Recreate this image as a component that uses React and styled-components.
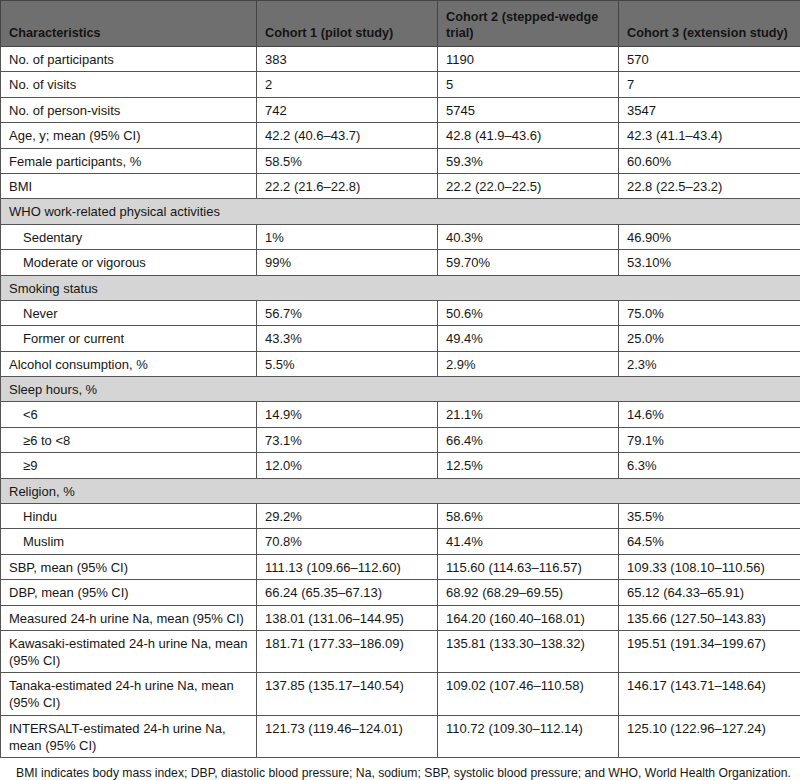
import React from "react";
import styled, { createGlobalStyle } from "styled-components";

const GlobalStyle = createGlobalStyle`
  body {
    margin: 0;
    background: #ffffff;
    font-family: "Liberation Sans", Arial, sans-serif;
    color: #161616;
  }
`;

const Page = styled.div`
  width: 800px;
`;

const Table = styled.table`
  width: 800px;
  border-collapse: collapse;
  table-layout: fixed;
  font-size: 13px;
  line-height: 17px;
`;

const HeadRow = styled.tr`
  height: 46px;
`;

const HeadCell = styled.th`
  border: 1px solid #454545;
  background: #6f6f6f;
  padding: 0 8px 5px 8px;
  text-align: left;
  vertical-align: bottom;
  font-size: 12.7px;
  font-weight: 700;
  line-height: 16px;
  color: #141414;
`;

const Cell = styled.td`
  border: 1px solid #555555;
  background: ${(p) => (p.$section ? "#d5d5d5" : "#ffffff")};
  padding: 4px 8px 3.4px ${(p) => (p.$indent ? "22px" : "8px")};
  vertical-align: top;
`;

const Footnote = styled.p`
  margin: 0;
  padding: 7px 0 0 16px;
  font-size: 12.2px;
  line-height: 16px;
  white-space: nowrap;
`;

const rows = [
  { label: "No. of participants", values: ["383", "1190", "570"] },
  { label: "No. of visits", values: ["2", "5", "7"] },
  { label: "No. of person-visits", values: ["742", "5745", "3547"] },
  { label: "Age, y; mean (95% CI)", values: ["42.2 (40.6–43.7)", "42.8 (41.9–43.6)", "42.3 (41.1–43.4)"] },
  { label: "Female participants, %", values: ["58.5%", "59.3%", "60.60%"] },
  { label: "BMI", values: ["22.2 (21.6–22.8)", "22.2 (22.0–22.5)", "22.8 (22.5–23.2)"] },
  { section: "WHO work-related physical activities" },
  { label: "Sedentary", indent: true, values: ["1%", "40.3%", "46.90%"] },
  { label: "Moderate or vigorous", indent: true, values: ["99%", "59.70%", "53.10%"] },
  { section: "Smoking status" },
  { label: "Never", indent: true, values: ["56.7%", "50.6%", "75.0%"] },
  { label: "Former or current", indent: true, values: ["43.3%", "49.4%", "25.0%"] },
  { label: "Alcohol consumption, %", values: ["5.5%", "2.9%", "2.3%"] },
  { section: "Sleep hours, %" },
  { label: "<6", indent: true, values: ["14.9%", "21.1%", "14.6%"] },
  { label: "≥6 to <8", indent: true, values: ["73.1%", "66.4%", "79.1%"] },
  { label: "≥9", indent: true, values: ["12.0%", "12.5%", "6.3%"] },
  { section: "Religion, %" },
  { label: "Hindu", indent: true, values: ["29.2%", "58.6%", "35.5%"] },
  { label: "Muslim", indent: true, values: ["70.8%", "41.4%", "64.5%"] },
  { label: "SBP, mean (95% CI)", values: ["111.13 (109.66–112.60)", "115.60 (114.63–116.57)", "109.33 (108.10–110.56)"] },
  { label: "DBP, mean (95% CI)", values: ["66.24 (65.35–67.13)", "68.92 (68.29–69.55)", "65.12 (64.33–65.91)"] },
  { label: "Measured 24-h urine Na, mean (95% CI)", values: ["138.01 (131.06–144.95)", "164.20 (160.40–168.01)", "135.66 (127.50–143.83)"] },
  { label: "Kawasaki-estimated 24-h urine Na, mean (95% CI)", values: ["181.71 (177.33–186.09)", "135.81 (133.30–138.32)", "195.51 (191.34–199.67)"] },
  { label: "Tanaka-estimated 24-h urine Na, mean (95% CI)", values: ["137.85 (135.17–140.54)", "109.02 (107.46–110.58)", "146.17 (143.71–148.64)"] },
  { label: "INTERSALT-estimated 24-h urine Na, mean (95% CI)", values: ["121.73 (119.46–124.01)", "110.72 (109.30–112.14)", "125.10 (122.96–127.24)"] },
];

const App = () => {
  return (
    <Page>
      <GlobalStyle />
      <Table>
        <colgroup>
          <col style={{ width: 256 }} />
          <col style={{ width: 181 }} />
          <col style={{ width: 181 }} />
          <col style={{ width: 182 }} />
        </colgroup>
        <thead>
          <HeadRow>
            <HeadCell>Characteristics</HeadCell>
            <HeadCell>Cohort 1 (pilot study)</HeadCell>
            <HeadCell>Cohort 2 (stepped-wedge trial)</HeadCell>
            <HeadCell>Cohort 3 (extension study)</HeadCell>
          </HeadRow>
        </thead>
        <tbody>
          {rows.map((row, i) =>
            row.section ? (
              <tr key={i}>
                <Cell $section colSpan={4}>{row.section}</Cell>
              </tr>
            ) : (
              <tr key={i}>
                <Cell $indent={row.indent}>{row.label}</Cell>
                {row.values.map((v, j) => (
                  <Cell key={j}>{v}</Cell>
                ))}
              </tr>
            )
          )}
        </tbody>
      </Table>
      <Footnote>
        BMI indicates body mass index; DBP, diastolic blood pressure; Na, sodium; SBP, systolic blood pressure; and WHO, World Health Organization.
      </Footnote>
    </Page>
  );
};

export default App;
